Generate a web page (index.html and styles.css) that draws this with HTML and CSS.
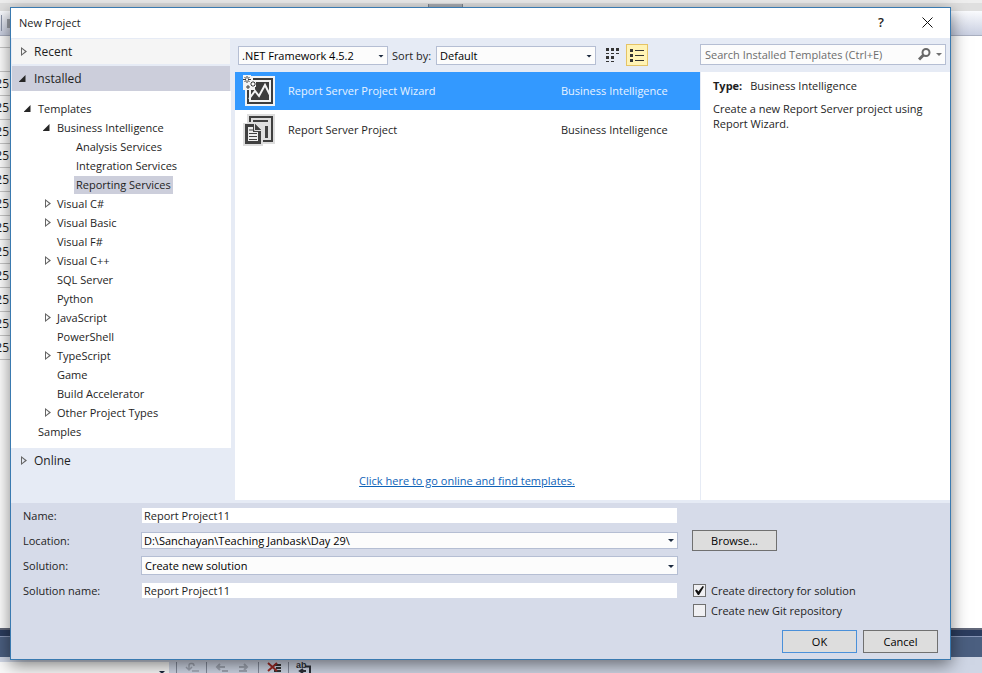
FILE: index.html
```html
<!DOCTYPE html>
<html lang="en">
<head>
<meta charset="utf-8">
<title>New Project</title>
<link rel="stylesheet" href="styles.css">
</head>
<body>
<div class="backdrop">
  <div class="back-title"><span class="back-tab"></span></div>
  <div class="back-toolbar"><span class="back-sep"></span><span class="back-tool"></span></div>
  <div class="back-sheet">
    <ul class="cells">
      <li></li><li></li><li>25</li><li>25</li><li>25</li><li>25</li><li>25</li><li>25</li><li>25</li><li>25</li><li>25</li><li>25</li><li>25</li><li>25</li>
    </ul>
  </div>
  <div class="back-frame"></div>
  <div class="back-pane"></div>
  <div class="back-tools">
    <span class="back-combo"></span>
    <svg width="160" height="11" viewBox="0 0 160 11" fill="none">
      <path d="M7.500 0V11M37.500 0V11M89.500 0V11M119.500 0V11" stroke="#858c9c"/>
      <path d="M20 7V3.500Q20 1.500 22 1.500H23Q25 1.500 25 4M17 5L20 8L23 5M23 9H30" stroke="#a0a6b3" stroke-width="1.500"/>
      <path d="M48 5H56M51 2L48 5L51 8M53 9H59M70 5H78M75 2L78 5L75 8M70 9H78" stroke="#a0a6b3" stroke-width="2"/>
      <path d="M105 3H112M107 6H112M105 9H112" stroke="#333" stroke-width="2"/>
      <path d="M99 1L108 9M108 1L99 9" stroke="#9c2b25" stroke-width="2"/>
      <path d="M136 4.500H141V11M132 9H137M134 7L131 9L134 11" stroke="#2d3038" stroke-width="2"/>
      <text x="127" y="6" class="tiny">ab</text>
    </svg>
  </div>
</div>

<main class="dialog">
  <header class="titlebar">
    <h1>New Project</h1>
    <button class="caption" type="button" aria-label="Help">?</button>
    <button class="caption" type="button" aria-label="Close"><svg width="11" height="11" viewBox="0 0 11 11"><path d="M.5.5L10.500 10.500M10.500.5L.5 10.500" stroke="#111" fill="none"/></svg></button>
  </header>

  <div class="browser">
    <nav class="sidebar">
      <button class="group recent" type="button"><i class="shut"></i>Recent</button>
      <button class="group installed" type="button"><i class="open"></i>Installed</button>
      <ul class="tree">
        <li class="l1"><i class="open"></i><span>Templates</span></li>
        <li class="l2"><i class="open"></i><span>Business Intelligence</span></li>
        <li class="l3"><i></i><span>Analysis Services</span></li>
        <li class="l3"><i></i><span>Integration Services</span></li>
        <li class="l3"><i></i><span class="picked">Reporting Services</span></li>
        <li class="l2"><i class="shut"></i><span>Visual C#</span></li>
        <li class="l2"><i class="shut"></i><span>Visual Basic</span></li>
        <li class="l2"><i></i><span>Visual F#</span></li>
        <li class="l2"><i class="shut"></i><span>Visual C++</span></li>
        <li class="l2"><i></i><span>SQL Server</span></li>
        <li class="l2"><i></i><span>Python</span></li>
        <li class="l2"><i class="shut"></i><span>JavaScript</span></li>
        <li class="l2"><i></i><span>PowerShell</span></li>
        <li class="l2"><i class="shut"></i><span>TypeScript</span></li>
        <li class="l2"><i></i><span>Game</span></li>
        <li class="l2"><i></i><span>Build Accelerator</span></li>
        <li class="l2"><i class="shut"></i><span>Other Project Types</span></li>
        <li class="l1"><i></i><span>Samples</span></li>
      </ul>
      <button class="group online" type="button"><i class="shut"></i>Online</button>
    </nav>

    <section class="center">
      <div class="toolbar">
        <span class="drop framework"><select aria-label="Framework"><option>.NET Framework 4.5.2</option></select></span>
        <label for="sort">Sort by:</label>
        <span class="drop sort"><select id="sort"><option>Default</option></select></span>
        <button class="view" type="button" aria-label="Small icons"><svg width="14" height="15" viewBox="0 0 14 15" fill="#333"><path d="M0 0h3v3H0zM5 0h3v3H5zM10 0h3v3h-3zM0 5h3v1H0zM5 5h3v1H5zM10 5h3v1h-3zM0 8h3v3H0zM5 8h3v3H5zM0 13h3v1H0zM5 13h3v1H5z"/></svg></button>
        <button class="view on" type="button" aria-label="List"><svg width="14" height="13" viewBox="0 0 14 13" fill="#333"><path d="M0 0h3v3H0zM0 5h3v3H0zM0 10h3v3H0zM5 1h9v1H5zM5 6h9v1H5zM5 11h9v1H5z"/></svg></button>
      </div>
      <div class="templates">
        <button class="item chosen" type="button">
          <svg width="32" height="32" viewBox="0 0 32 32">
            <path d="M0 1H32V31H2V15H0Z" fill="#f4f4f4"/>
            <path d="M10 3H30V29H4V15H6V27H28V5H10Z" fill="#3d3d3d"/>
            <path d="M12 7H26V25H8V15H12Z" fill="#3d3d3d"/>
            <path d="M6 24L12 16L16 21L22 10L27 20" fill="none" stroke="#f4f4f4" stroke-width="2"/>
            <path d="M0 0H8V5H13V12H9V15H0Z" fill="#f4f4f4"/>
            <path d="M4 1V8M0 4.500H8M1.500 2L6.500 7M6.500 2L1.500 7M10 6V12M7 9H13M8 7L12 11M12 7L8 11M5 10V14M3 12H7" stroke="#3d3d3d"/>
            <path d="M3 3.500h2v2H3zM9 8h2v2H9z" fill="#fff"/>
          </svg>
          <span class="name">Report Server Project Wizard</span><span class="kind">Business Intelligence</span>
        </button>
        <button class="item" type="button">
          <svg width="32" height="32" viewBox="0 0 32 32">
            <path d="M4 0H32V30H20V32H0V9H4Z" fill="#dedede"/>
            <path d="M6 2H30V28H20V26H28V4H8V8H6Z" fill="#404040"/>
            <path d="M10 6H25V8H10ZM22 12H25V24H22Z" fill="#404040"/>
            <path d="M2 10H12L18 16V30H2Z" fill="#404040"/>
            <path d="M5 13H10V18H15V27H5Z" fill="#ececec"/>
            <path d="M6 16H10M6 19.500H14M6 22.500H14M6 25.500H14" stroke="#404040" stroke-width="1"/>
            <path d="M11.500 9V16.500H19" fill="none" stroke="#dedede"/>
            <path d="M12 10L18 16H12Z" fill="#404040"/>
          </svg>
          <span class="name">Report Server Project</span><span class="kind">Business Intelligence</span>
        </button>
        <a class="more" href="#">Click here to go online and find templates.</a>
      </div>
    </section>

    <aside class="side">
      <div class="search">
        <input type="search" aria-label="Search" placeholder="Search Installed Templates (Ctrl+E)">
        <svg width="13" height="13" viewBox="0 0 13 13" fill="none" stroke="#686868"><circle cx="8" cy="4.500" r="3.500" stroke-width="2"/><path d="M5.500 7L1 11.500" stroke-width="3"/></svg>
        <span class="caret"></span>
      </div>
      <div class="details">
        <p><b>Type:</b>Business Intelligence</p>
        <p class="about">Create a new Report Server project using Report Wizard.</p>
      </div>
    </aside>
  </div>

  <form class="form">
    <div class="fields">
      <label for="name">Name:</label>
      <input class="text" id="name" type="text" value="Report Project11">
      <label class="row2" for="location">Location:</label>
      <span class="drop low"><select id="location"><option>D:\Sanchayan\Teaching Janbask\Day 29\</option></select></span>
      <button class="btn browse" type="button">Browse...</button>
      <label class="row3" for="solution">Solution:</label>
      <span class="drop"><select id="solution"><option>Create new solution</option></select></span>
      <label class="row4" for="solname">Solution name:</label>
      <input class="text" id="solname" type="text" value="Report Project11">
      <label class="check"><input type="checkbox" checked>Create directory for solution</label>
      <label class="check second"><input type="checkbox">Create new Git repository</label>
    </div>
    <div class="actions">
      <button class="btn ok" type="button">OK</button>
      <button class="btn" type="button">Cancel</button>
    </div>
  </form>
</main>
</body>
</html>
```
FILE: styles.css
```css
* { box-sizing: border-box; }

body {
  margin: 0;
  min-height: 100vh;
  display: grid;
  grid-template: minmax(0, 1fr) / minmax(0, 1fr);
  font: 11px/15px "Open Sans", "Noto Sans", sans-serif;
  color: #1e1e1e;
}

button, input, select { font: inherit; color: inherit; margin: 0; border-radius: 0; }
button { border: 0; padding: 0; background: none; text-align: left; }
ul { list-style: none; margin: 0; padding: 0; }
p { margin: 0; }
svg { display: block; flex: none; }

/* Application window behind the dialog */
.backdrop {
  grid-area: 1 / 1;
  display: flex;
  flex-direction: column;
  overflow: hidden;
  background: #fff;
}
.back-title {
  height: 11px;
  display: flex;
  justify-content: center;
  background: linear-gradient(#eee 3px, #dfdfdf 3px);
}
.back-tab {
  width: 35px;
  margin: 4px 91px 0 0;
  background: #a9adb3;
  border: solid #7d858e;
  border-width: 0 1px;
}
.back-toolbar {
  height: 25px;
  display: flex;
  align-items: center;
  gap: 5px;
  background: linear-gradient(#fafbfe, #c9cfe1);
  border-bottom: 1px solid #a9afc0;
}
.back-sep { width: 2px; height: 16px; border-right: 1px solid #8b93a7; }
.back-tool { width: 10px; height: 9px; background: #9ca0a8; }
.back-sheet { flex: 1; }
.cells { width: 16px; }
.cells li {
  height: 24px;
  border-bottom: 1px solid #c8c8c8;
  padding-right: 7px;
  font-size: 12px;
  line-height: 24px;
  display: flex;
  justify-content: flex-end;
}
.cells li:first-child { height: 12px; }
.back-frame {
  height: 9px;
  background: #2b3c5e;
  border-top: 2px solid #62687a;
  border-bottom: 1px solid #8795b5;
}
.back-pane { height: 20px; background: #4b5f80; }
.back-tools {
  height: 16px;
  display: flex;
  align-items: flex-end;
  background: #cfd6e5;
}
.back-combo {
  width: 169px;
  height: 11px;
  background: #fafafa;
  position: relative;
}
.tiny { font: bold 9px "Liberation Sans", sans-serif; fill: #2d3038; }

/* Dialog frame */
.dialog {
  grid-area: 1 / 1;
  position: relative;
  margin: 7px 31px 13px 10px;
  display: flex;
  flex-direction: column;
  background: #e6ebf5;
  border: 1px solid #3a7ab0;
  box-shadow: 0 5px 16px rgba(0, 0, 0, .5);
}
.titlebar {
  height: 30px;
  display: flex;
  align-items: center;
  padding: 0 0 2px 8px;
  background: #fff;
}
.titlebar h1 { margin: 0; flex: 1; font-size: 11px; font-weight: 400; }
.caption {
  width: 46px;
  height: 28px;
  display: flex;
  align-items: center;
  justify-content: center;
  font-size: 13px;
  font-weight: 600;
}
.browser { flex: 1; display: flex; padding-bottom: 3px; }

/* Category tree */
.sidebar { width: 220px; padding-top: 1px; display: flex; flex-direction: column; }
.group {
  height: 25px;
  display: flex;
  align-items: center;
  gap: 7px;
  margin: 0 1px;
  padding-left: 5px;
  font-size: 12px;
}
.recent { background: #f5f5f5; margin-bottom: 2px; }
.installed { background: #cccedb; }
.tree { background: #fff; padding: 8px 0 7px; }
.tree li { height: 19px; display: flex; align-items: center; gap: 4px; }
.tree .l1 { padding-left: 11px; }
.tree .l2 { padding-left: 30px; }
.tree .l3 { padding-left: 49px; }
.tree span { padding: 0 2px; line-height: 18px; }
.tree .picked { background: #cccedb; }
i { width: 10px; height: 10px; flex: none; display: flex; align-items: center; justify-content: center; }
.shut { justify-content: flex-end; }
.open::before {
  content: "";
  width: 7px;
  height: 7px;
  background: #262626;
  clip-path: polygon(100% 0, 100% 100%, 0 100%);
}
.shut::before {
  content: "";
  width: 6px;
  height: 9px;
  background: #666;
  clip-path: polygon(0 0, 100% 50%, 0 100%, 0 0, 1px 2px, 1px 7px, 4px 50%, 1px 2px);
}

/* Template list */
.center { flex: 1; min-width: 0; margin-left: 4px; display: flex; flex-direction: column; }
.toolbar { height: 34px; display: flex; align-items: center; padding-left: 3px; }
.framework { width: 150px; margin-right: 4px; }
.sort { width: 160px; margin-left: 5px; margin-right: 6px; }
.view {
  width: 22px;
  height: 22px;
  display: flex;
  align-items: center;
  justify-content: center;
}
.view.on { background: #fff3b5; border: 1px solid #e5c365; margin-left: 2px; }
.drop { position: relative; display: flex; height: 19px; }
.drop select {
  flex: 1;
  min-width: 0;
  appearance: none;
  background: #fcfcfc;
  border: 1px solid #b5bed3;
  padding: 0 16px 0 3px;
  color: #000;
}
.drop::after, .caret, .back-combo::after {
  content: "";
  width: 6px;
  height: 3px;
  background: #1b293e;
  clip-path: polygon(0 0, 100% 0, 50% 100%);
}
.drop::after, .back-combo::after { position: absolute; right: 4px; top: 9px; pointer-events: none; }
.templates {
  flex: 1;
  display: flex;
  flex-direction: column;
  gap: 1px;
  background: #fff;
}
.item {
  height: 38px;
  display: flex;
  align-items: center;
  padding: 0 9px 0 8px;
}
.chosen { background: #3399ff; color: #e8f3ff; }
.name, .kind { padding-bottom: 2px; }
.name { flex: 1; margin-left: 13px; }
.kind { width: 130px; }
.more {
  margin: auto auto 12px;
  padding-right: 1px;
  color: #0e63b8;
}

/* Search and description */
.side { width: 250px; display: flex; flex-direction: column; }
.search {
  height: 21px;
  margin: 6px 4px 7px 0;
  display: flex;
  align-items: center;
  background: #fcfcfc;
  border: 1px solid #b5bed3;
  padding-right: 3px;
}
.search input {
  flex: 1;
  min-width: 0;
  border: 0;
  padding: 0 4px;
  background: none;
  appearance: none;
  outline: 0;
}
.search input::placeholder { color: #6d6d6d; opacity: 1; }
.search .caret { margin-left: 5px; background: #717171; }
.details { flex: 1; padding: 6px 16px 0 12px; background: #fff; border-left: 1px solid #e6ebf5; }
.details b { margin-right: 8px; }
.about { margin-top: 8px; }

/* Project settings */
.form { background: #d6dbe9; padding: 0 12px 6px; }
.fields {
  display: grid;
  grid-template-columns: 118px minmax(0, 1fr) 260px;
  grid-template-rows: repeat(4, 25px) 14px;
  align-items: center;
}
.fields > label { grid-column: 1; }
.text {
  grid-column: 2;
  height: 15px;
  min-width: 0;
  margin: 0 1px;
  border: 0;
  padding: 0 2px;
  background: #fff;
}
.low { height: 17px; }
.low::after { top: 7px; }
.low select { padding-left: 2px; }
.btn {
  width: 75px;
  height: 23px;
  background: #ddd;
  border: 1px solid #707070;
  text-align: center;
  color: #000;
}
.browse { grid-column: 3; width: 85px; height: 21px; margin-left: 14px; }
.fields > .check {
  grid-column: 3;
  grid-row: 4;
  display: flex;
  align-items: center;
  gap: 5px;
  margin-left: 15px;
}
.fields > .second { grid-row: 5; }
.check input {
  appearance: none;
  width: 13px;
  height: 13px;
  border: 1px solid #707070;
  background: #f0f0f3;
  display: flex;
  align-items: center;
  justify-content: center;
}
.check input:checked::before {
  content: "";
  width: 9px;
  height: 9px;
  background: #111;
  clip-path: polygon(0 50%, 20% 38%, 38% 62%, 85% 0, 100% 8%, 45% 100%, 32% 100%);
}
.actions { display: flex; justify-content: flex-end; gap: 6px; margin-top: 13px; }
.ok { border-color: #4a90d9; }
```
